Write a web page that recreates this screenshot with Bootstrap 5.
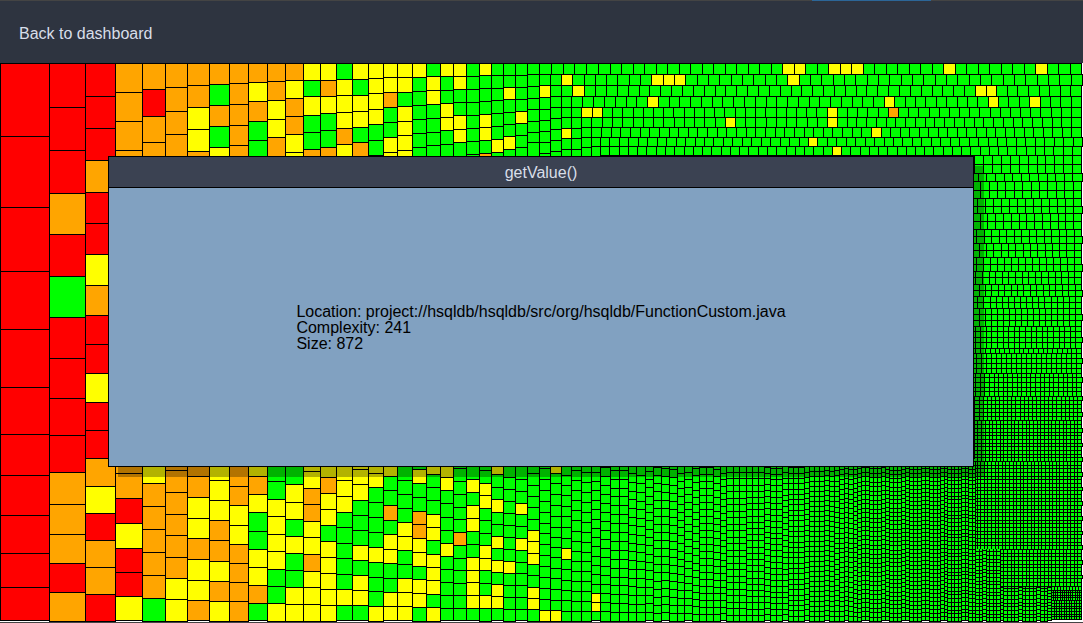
<!DOCTYPE html>
<html lang="en">
<head>
<meta charset="utf-8">
<meta name="viewport" content="width=device-width, initial-scale=1">
<title>Complexity treemap</title>
<link href="https://cdn.jsdelivr.net/npm/bootstrap@5.3.0/dist/css/bootstrap.min.css" rel="stylesheet">
<style>
  body { font-family: "Liberation Sans", Arial, sans-serif; font-size: 16px; background: #fff; }
  .page-bar { height: 63px; background: #2e3440; border-top: 1px solid #444; padding: 4px 19px 0; }
  .page-bar a { color: #d8dee9; }
  .load-mark { top: -1px; left: 75%; width: 11%; height: 1px; background: #2c6698; }
  .treemap { flex: 1 1 0; min-height: 0; width: 100%; display: block; }
  .page-end { height: 1px; background: #444; }
  .method-panel { left: 10%; top: 25%; width: calc(80% - 1px); height: 50%; border: 1px solid #000; background: #81a1c1; box-shadow: 10px 10px 0 rgba(0, 0, 0, .3); color: #000; }
  .method-title { height: 31px; font-size: 16px; line-height: 32px; background: #3b4252; color: #d8dee9; border-bottom: 1px solid #000; }
  .method-body { padding-top: 2px; }
  .method-facts { line-height: 16px; }
</style>
</head>
<body>
<div class="vh-100 d-flex flex-column position-relative overflow-hidden">
  <nav class="page-bar d-flex align-items-center position-relative flex-shrink-0">
    <a class="text-decoration-none" href="#">Back to dashboard</a>
    <div class="load-mark position-absolute"></div>
  </nav>
  <svg class="treemap" id="treemap" viewBox="0 63 1083 559" preserveAspectRatio="none" shape-rendering="crispEdges" role="img" aria-label="Methods by size and complexity"></svg>
  <div class="page-end flex-shrink-0"></div>

  <section class="method-panel position-absolute d-flex flex-column" role="dialog" aria-labelledby="methodTitle">
    <h1 class="method-title text-center fw-normal m-0 flex-shrink-0" id="methodTitle">getValue()</h1>
    <div class="method-body flex-fill d-flex align-items-center justify-content-center">
      <div class="method-facts">
        <div>Location: project://hsqldb/hsqldb/src/org/hsqldb/FunctionCustom.java</div>
        <div>Complexity: 241</div>
        <div>Size: 872</div>
      </div>
    </div>
  </section>
</div>
<script src="https://cdn.jsdelivr.net/npm/bootstrap@5.3.0/dist/js/bootstrap.bundle.min.js"></script>
<script>
  // Left part of the map: "left edge | risk letter + top edge of each cell ... | bottom edge"
  const columns = `
0|R63 R136 R207 R271 R329 R387 R434 R475 R515 R553 R587|620
49|R63 R107 R150 O193 R234 G276 R317 R358 R398 R435 O472 O504 O534 R563 O592|621
85|R63 R96 R128 O160 R192 R223 Y254 O285 R315 R344 Y373 R402 R430 O458 Y486 R513 O540 O567 R594|621
115|O63 O92 O121 O150 O466 O473 R498 Y523 R548 R572 Y596|620
142|O63 R89 O116 O142 Y460 O483 O506 O529 O552 O575 G598|621
165|O63 O87 O111 O134 O460 O470 O492 O514 O535 O557 Y578 Y599|621
187|O63 O85 Y107 Y129 O151 O460 O476 Y497 Y518 O538 Y559 Y580 O600|620
209|O63 G84 O105 G126 Y147 Y460 Y480 Y500 O520 O540 Y561 O581 Y601|621
229|O63 O83 O104 O125 O145 O460 O486 Y505 Y525 O544 O563 O582 O601|621
248|O63 Y82 O101 G121 G140 Y460 O476 Y494 G512 G531 Y549 Y567 O585 G603|620
267|O63 O81 Y100 Y119 O137 G460 G481 Y499 Y516 Y534 Y551 G569 G586 Y603|621
285|O63 Y80 O98 O116 Y134 Y152 G460 Y484 Y502 G519 Y536 G553 G570 Y587 Y604|621
303|Y63 G80 Y96 G115 G132 O149 Y460 Y471 O488 O504 Y521 Y537 O554 Y571 Y587 Y604|621
320|Y63 O80 Y96 G113 G130 O147 Y460 O477 Y493 Y509 G525 Y541 Y557 Y573 Y589 Y605|621
336|G63 Y79 Y95 Y112 O128 Y144 Y460 Y480 Y496 G512 G527 G543 G558 G574 Y589 G605|620
352|Y63 G79 Y95 Y111 G127 O142 Y460 Y469 Y484 G500 G515 G530 Y545 G560 Y575 Y590 G605|620
368|Y63 Y78 Y93 Y109 G124 G140 G155 Y460 Y473 G487 G502 G517 G532 Y547 G562 G577 G591 Y606|621
383|Y63 Y77 O92 G107 G122 Y137 Y152 Y460 G476 G490 O505 G520 Y534 Y549 G563 G578 Y592 Y606|620
397|Y63 Y77 G92 Y106 Y121 Y135 Y150 G460 G480 G494 G508 Y522 Y536 G550 G564 Y578 Y592 Y606|620
412|Y63 G77 G91 G105 G119 G133 G147 G460 Y469 G483 G497 O511 O524 Y538 Y552 G566 Y579 Y593 G607|621
426|G63 Y76 Y90 G104 G118 G132 G145 Y460 G474 G487 G500 Y514 Y527 G540 Y554 Y567 Y580 G594 Y607|621
440|Y63 G76 G90 Y103 Y117 G130 G144 Y460 Y477 G490 G503 G517 G530 Y543 G556 G569 G582 G595 G608|620
453|Y63 Y76 G89 G102 Y115 Y129 G142 G468 G481 G494 G507 G519 O532 G545 G558 G570 G583 G595 G608|620
466|G63 G76 G89 G102 G115 G128 G141 G154 G460 Y479 G492 Y505 Y518 G531 G544 Y557 Y570 Y582 Y595 G608|620
479|Y63 G75 G88 G101 Y114 Y127 G140 O153 G460 G470 Y483 Y495 G508 G520 G533 Y545 Y558 G570 G583 Y595 G608|621
491|G63 G75 G88 G100 G113 G126 Y139 G152 Y460 G474 G487 Y499 G512 G524 Y536 G548 Y560 G572 Y584 Y596 G608|620
503|G63 G75 Y87 G99 G112 G124 Y136 G149 G460 G477 G489 G501 G513 G525 G537 G549 Y561 G573 G585 G597 G609|621
515|G63 G75 G87 G99 Y111 G123 G135 G147 G460 G479 G491 Y503 G514 G526 Y538 G550 G562 G573 G585 G597 G609|620
527|G74 G86 G98 G109 G121 G132 G142 G460 G473 G485 G496 G507 G519 Y530 Y541 Y553 G564 G575 Y587 Y598 G609|621
539|G74 Y85 G97 G109 G120 G131 G142 G153 G457 G468 G479 G490 G501 G512 G523 G533 G544 G555 G566 G577 G588 G599 Y610|621
550|G74 G85 G96 G107 G118 G129 G140 G151 Y460 G473 G483 G494 G505 G516 G527 G537 G547 G557 G568 G578 G589 G600 Y610|621
561|G96 G107 G117 Y128 G138 G149 G460 G475 G485 G495 G506 G516 G527 G538 Y548 G559 G569 G580 G590 G600 G611|621
571|G117 G128 G138 G149 G460 G470 G480 G490 G500 G510 G520 G531 G541 G551 G561 G571 G581 G591 G601 G611|621
581|G117 G127 G137 G147 G462 G472 G482 G492 G502 G512 G522 G532 G542 G552 G561 G571 G581 G591 G601 G611|621
591|G137 G146 G463 G472 G481 G490 G500 G509 G519 G528 G537 G546 G556 G565 G574 G584 Y593 Y602 G611|620
600|G460 G467 G476 G485 G494 G503 G512 G521 G530 G539 G548 G557 G566 G575 G584 G593 G602 G611|621`.trim().split('\n');
  // The yellow cell at x 550 reaches a little below the panel
  const fills = { R: '#ff0000', O: '#ffa500', Y: '#ffff00', G: '#00ff00' };
  const paths = { R: [], O: [], Y: [], G: [], K: [] };
  const box = (x, y, x2, y2) => `M${x} ${y}H${x2}V${y2}H${x}z`;
  function cell(risk, x, y, x2, y2) {
    paths.K.push(box(x, y, x2 + 1, y2 + 1));
    if (x2 - x > 1 && y2 - y > 1) paths[risk].push(box(x + 1, y + 1, x2, y2));
  }
  // Value of the last stop at or before v
  const stepAt = (stops, v) => stops.filter(s => s[0] <= v).pop()[1];
  function evenRow(x0, x1, n, y, y2, marks = {}) {
    for (let i = 0; i < n; i++) {
      const a = Math.round(x0 + (x1 - x0) * i / n), b = Math.round(x0 + (x1 - x0) * (i + 1) / n);
      const hit = Object.keys(marks).find(k => +k >= a && +k < b);
      cell(hit ? marks[hit] : 'G', a, y, b, y2);
    }
  }
  // Cells of one pitch, counted up from the bottom edge
  function stackUp(x, x2, top, bottom, pitch) {
    for (let i = 0, y = bottom; y > top; i++) {
      const next = Math.max(top, Math.round(bottom - (i + 1) * pitch));
      cell('G', x, next, x2, y);
      y = next;
    }
  }

  // Left columns
  columns.forEach((line, i) => {
    const [x, list, end] = line.split('|');
    const right = i + 1 < columns.length ? parseInt(columns[i + 1]) : 610;
    const cells = list.split(' ');
    cells.forEach((c, j) => cell(c[0], +x, +c.slice(1), right, j + 1 < cells.length ? +cells[j + 1].slice(1) : +end));
  });

  // Long rows along the top: [top, bottom, segments [from, to, count], marked cells by x]
  const rows = [
    [63, 74, [[527, 610, 7], [610, 1081, 41]], { 790: 'Y', 801: 'Y', 835: 'Y', 847: 'Y', 858: 'Y', 950: 'Y', 1041: 'Y' }],
    [74, 85, [[561, 606, 4], [606, 1082, 42]], { 567: 'Y', 658: 'Y', 669: 'Y', 680: 'Y', 793: 'Y' }],
    [85, 96, [[561, 606, 4], [606, 975, 34], [975, 1081, 10]], { 577: 'Y', 980: 'Y', 991: 'Y' }],
    [96, 107, [[571, 604, 3], [604, 884, 26], [884, 1081, 19]], { 653: 'Y', 889: 'Y', 994: 'Y', 1035: 'Y' }],
    [107, 117, [[571, 602, 3], [602, 898, 29], [898, 1081, 18]], { 587: 'Y', 597: 'Y', 831: 'Y', 893: 'O' }],
    [117, 127, [[591, 602, 1], [602, 827, 22], [827, 1081, 26]], { 729: 'Y', 831: 'Y' }],
    [127, 137, [[591, 601, 1], [601, 871, 28], [871, 1081, 22]], { 875: 'Y' }],
    [137, 146, [[600, 808, 22], [808, 1082, 29]], { 813: 'Y' }],
    [146, 155, [[600, 832, 25], [832, 1081, 27]], { 837: 'Y' }]
  ];
  rows.forEach(([y, y2, parts, marks]) => parts.forEach(([a, b, n]) => evenRow(a, b, n, y, y2, marks)));

  // Bottom columns, shrinking to the right; neighbours of one size share their lines
  const xs = [610, 619, 628, 636, 645, 653, 661, 669, 677, 684, 692, 699, 706, 713, 720, 726, 733, 739, 746, 752, 758, 764, 770, 776, 782, 788, 793, 798, 804, 809, 814, 819, 824, 829, 834, 839, 844, 848, 853, 857];
  for (let x = 861; x <= 933; x += 4) xs.push(x);
  while (xs[xs.length - 1] < 998) xs.push(xs[xs.length - 1] + (xs.length % 2 ? 4 : 3));
  const edge = xs[xs.length - 1];
  const colPitch = [[610, 8.9], [628, 8.7], [636, 8.6], [645, 8.3], [653, 8.1], [661, 8], [677, 7.8], [684, 7.4], [692, 7.3], [699, 7], [713, 6.9], [720, 6.7], [726, 6.5], [746, 6.2], [764, 5.9], [782, 5.7], [788, 5.3], [809, 5], [834, 5.2], [839, 4.9], [853, 4.6], [857, 4.5], [885, 4.2], [903, 4], [941, 3.8], [975, 3.67]];
  for (let i = 0; i + 1 < xs.length; i++)
    stackUp(xs[i], xs[i + 1], xs[i] >= 975 ? 548 : 457, xs[i] % 20 < 6 ? 620 : 621, stepAt(colPitch, xs[i]));

  // Right-hand rows, shrinking downwards
  const ys = [155, 164, 173, 181, 190, 198, 206, 213, 221, 229, 236, 243, 250, 257, 264, 271, 277, 284, 290, 296, 302, 308, 314, 320, 326, 331, 337, 342, 348, 353, 358, 363, 368, 373, 377, 382, 387, 391, 396, 400, 404, 408, 412, 416, 420, 424, 428];
  while (ys[ys.length - 1] < 586) ys.push(ys[ys.length - 1] + (ys.length % 3 ? 4 : 3));
  const rowPitch = [[155, 8.9], [173, 8.6], [181, 8.4], [198, 8], [213, 7.8], [229, 7.5], [243, 7.3], [257, 7], [271, 6.6], [284, 6.4], [296, 6.1], [308, 6], [326, 5.6], [348, 4.8], [353, 5], [373, 4.6], [396, 4.1], [420, 3.7], [460, 3.6], [548, 3.7]];
  for (let i = 0; i + 1 < ys.length; i++) {
    const from = ys[i] < 460 ? 960 : ys[i] < 548 ? 975 : edge, pitch = stepAt(rowPitch, ys[i]);
    const end = i % 4 === 2 ? 1082 : 1081;
    for (let k = 0, x = end; x > from; k++) {
      const next = Math.max(from, Math.round(1081 - (k + 1) * pitch));
      cell('G', next, ys[i], x, ys[i + 1]);
      x = next;
    }
  }

  // Smallest methods in the corner
  const low = ys[ys.length - 1];
  let x = edge;
  for (let i = 0; x < 1045; i++) { const n = x + (i % 3 ? 4 : 3); stackUp(x, n, low, i % 5 ? 621 : 620, 3.7); x = n; }
  stackUp(x, x + 4, low, 620, 3);
  evenRow(x + 4, 1081, 10, low, low + 4);
  for (let y = low + 4, i = 0; y < 619; i++) {
    const h = i < 4 ? 2 + i % 2 : (i % 3 ? 3 : 2);
    evenRow(x + 4, 1081, i < 4 ? 14 : 12, y, y + h);
    y += h;
  }

  const svg = document.getElementById('treemap');
  ['K', 'R', 'O', 'Y', 'G'].forEach(k => {
    const p = document.createElementNS('http://www.w3.org/2000/svg', 'path');
    p.setAttribute('d', paths[k].join(''));
    p.setAttribute('fill', fills[k] || '#000');
    svg.appendChild(p);
  });
</script>
</body>
</html>
